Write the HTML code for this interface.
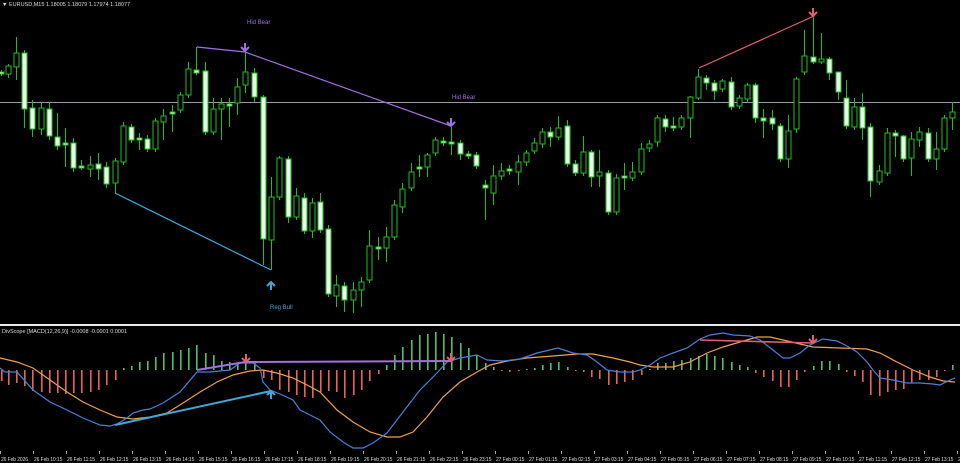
<!DOCTYPE html>
<html><head><meta charset="utf-8"><style>
html,body{margin:0;padding:0;background:#000;width:960px;height:463px;overflow:hidden}
svg{display:block}
text{font-family:"Liberation Sans",sans-serif}
</style></head><body>
<svg id="s" width="960" height="463" viewBox="0 0 960 463" xmlns="http://www.w3.org/2000/svg">
<rect width="960" height="463" fill="#000"/>
<line x1="0" y1="102.5" x2="960" y2="102.5" stroke="#9a9aaa" stroke-width="1"/>
<g id="candles"></g>
<polyline points="197,47 245,52 451,126" fill="none" stroke="#a070e0" stroke-width="1.2"/>
<line x1="115" y1="193" x2="271" y2="270" stroke="#40a8d8" stroke-width="1.2"/>
<line x1="699" y1="68" x2="814" y2="16" stroke="#e06070" stroke-width="1.2"/>
<text x="247" y="24" font-size="6" fill="#a070e0">Hid Bear</text>
<text x="452" y="99" font-size="6" fill="#a070e0">Hid Bear</text>
<text x="270" y="309" font-size="6" fill="#40a8d8">Reg Bull</text>
<g id="arrows"></g>
<text x="2" y="6" font-size="5.5" fill="#dddddd">▼ EURUSD,M15  1.18005 1.18079 1.17974 1.18077</text>
<rect x="0" y="324" width="960" height="2" fill="#e8e8e8"/>
<text x="2" y="333" font-size="5.5" fill="#dddddd">DivScope [MACD(12,26,9)] -0.0008 -0.0001 0.0001</text>
<g id="hist"></g>
<g id="lines"></g>
<g id="axis"></g>
</svg>
<script>
var NS="http://www.w3.org/2000/svg";
function el(p,t,a){var e=document.createElementNS(NS,t);for(var k in a)e.setAttribute(k,a[k]);p.appendChild(e);return e;}
var C=[[1,70,76,72,74,'w'],[8,64,78,66,74,'h'],[16,37,80,53,67,'h'],[24,50,128,53,109,'w'],[32,100,137,108,129,'w'],[41,102,135,108,129,'h'],[49,102,140,109,136,'w'],[57,113,150,137,146,'w'],[65,128,167,143,145,'w'],[73,138,172,143,168,'w'],[81,160,170,166,168,'w'],[90,156,177,165,169,'h'],[98,153,180,164,169,'w'],[106,162,188,167,184,'w'],[115,158,193,161,183,'h'],[123,122,165,126,162,'h'],[131,124,143,127,140,'w'],[139,133,150,138,140,'w'],[147,135,152,139,149,'w'],[155,118,152,121,149,'h'],[163,109,140,116,122,'h'],[172,105,132,112,114,'w'],[180,92,113,95,110,'h'],[188,62,98,69,95,'h'],[196,47,75,70,73,'w'],[205,62,135,71,132,'w'],[213,98,135,109,132,'h'],[221,98,140,104,109,'h'],[229,98,127,104,106,'w'],[237,78,115,87,103,'h'],[245,50,93,72,85,'h'],[254,68,102,73,97,'w'],[263,95,265,97,239,'w'],[271,177,270,197,240,'h'],[279,156,200,158,197,'h'],[288,156,223,159,217,'w'],[296,188,220,196,217,'h'],[304,193,234,198,231,'w'],[312,198,238,203,231,'h'],[320,193,233,202,230,'w'],[328,225,297,229,294,'w'],[336,275,307,285,296,'h'],[344,282,312,286,300,'w'],[353,282,313,290,300,'h'],[361,277,307,282,290,'h'],[369,230,283,246,280,'h'],[378,237,260,247,249,'w'],[386,227,262,237,248,'h'],[394,200,240,205,237,'h'],[402,183,213,189,207,'h'],[411,163,191,172,188,'h'],[419,155,177,167,169,'w'],[427,153,177,155,167,'h'],[435,137,156,140,153,'h'],[443,137,146,141,143,'w'],[451,127,155,142,144,'w'],[460,140,160,143,154,'w'],[468,151,159,154,156,'w'],[476,152,169,155,166,'w'],[485,180,220,185,188,'w'],[493,165,205,176,193,'h'],[501,163,180,171,176,'h'],[509,165,175,169,171,'w'],[518,155,185,162,172,'h'],[526,150,166,153,162,'h'],[534,138,154,143,151,'h'],[542,128,148,132,144,'h'],[550,127,147,132,137,'w'],[558,116,140,128,137,'h'],[567,120,167,126,164,'w'],[575,160,176,164,173,'w'],[583,136,176,152,173,'h'],[591,150,187,152,177,'w'],[599,150,187,172,176,'h'],[608,170,215,173,212,'w'],[616,174,215,178,212,'h'],[624,163,190,176,178,'w'],[632,162,181,172,178,'h'],[641,143,175,149,172,'h'],[649,140,152,144,148,'h'],[657,115,147,118,142,'h'],[665,115,132,119,127,'w'],[673,117,131,126,128,'w'],[681,115,130,118,127,'h'],[690,96,138,97,118,'h'],[698,69,100,77,98,'h'],[706,75,90,78,83,'w'],[714,80,100,83,91,'w'],[722,79,92,81,89,'h'],[731,77,110,82,107,'w'],[739,95,109,98,106,'h'],[747,83,103,85,99,'h'],[755,83,123,85,118,'w'],[763,109,138,118,121,'w'],[772,110,130,118,124,'w'],[780,123,162,126,159,'w'],[788,115,168,131,159,'h'],[796,77,133,79,129,'h'],[804,30,75,56,72,'h'],[813,15,64,57,62,'w'],[821,33,64,59,62,'h'],[829,57,80,59,73,'w'],[838,72,100,72,92,'w'],[846,80,129,98,126,'w'],[854,98,130,107,127,'h'],[862,93,140,107,128,'w'],[870,123,197,127,181,'w'],[879,165,185,171,182,'h'],[887,128,176,133,173,'h'],[895,130,157,133,136,'w'],[903,135,162,136,159,'w'],[911,132,176,139,158,'h'],[919,127,147,132,140,'h'],[928,128,162,133,159,'w'],[936,132,170,149,159,'h'],[944,115,152,118,149,'h'],[952,102,130,112,118,'h']];
var g=document.getElementById('candles');
C.forEach(function(c){var x=c[0];
el(g,'line',{x1:x+.5,y1:c[1],x2:x+.5,y2:c[2],stroke:'#1fbf1f','stroke-width':1});
var h=Math.max(c[4]-c[3],1.5);
el(g,'rect',{x:x-2,y:c[3],width:5,height:h,fill:c[5]=='w'?'#eaffea':'#000',stroke:'#1fbf1f','stroke-width':1});
});
var H=[-11,-15,-13,-16,-21,-22,-23,-23,-24,-23,-23,-22,-20,-15,-10,2,4,8,9,13,17,18,20,22,25,17,15,9,8,7,7,7,-8,-10,-20,-22,-25,-27,-28,-22,-21,-22,-28,-25,-20,-11,-4,5,15,23,30,35,36,38,36,33,27,22,15,7,3,-1,-2,-1,1,2,5,7,8,3,-1,-2,-7,-9,-15,-14,-12,-10,-5,1,7,7,9,10,12,14,16,14,12,8,5,3,-3,-7,-11,-17,-17,-10,-2,4,9,9,6,-2,-6,-12,-25,-26,-22,-20,-19,-13,-10,-10,-7,-1,5];
var hg=document.getElementById('hist');
H.forEach(function(v,i){var x=C[i]?C[i][0]:i*8.2;
if(v>0)el(hg,'rect',{x:x,y:370-v,width:1.6,height:v,fill:'#4fbf6f'});
else el(hg,'rect',{x:x,y:370,width:1.6,height:-v,fill:'#e8605f'});});
var lg=document.getElementById('lines');
var blue="0,368 5,372 17,372 33,390 50,402 67,410 83,418 100,425 110,426 117,424 127,418 133,413 143,410 150,409 163,403 180,392 197,372 210,372 230,370 240,363 253,363 260,368 263,382 270,390 280,394 293,400 300,410 310,415 320,420 330,432 343,442 353,448 363,448 373,443 387,433 403,412 420,390 437,373 447,362 460,358 477,355 487,360 503,361 520,359 537,353 558,348 573,353 587,355 597,362 607,370 620,372 633,372 640,370 650,365 660,358 673,353 687,348 700,339 710,335 723,333 733,335 750,336 760,340 773,350 783,358 790,358 800,353 810,345 823,339 837,341 847,346 857,352 867,362 873,370 880,378 893,380 907,383 920,383 933,384 940,385 950,380 955,378";
var orange="0,358 17,362 33,368 50,380 67,392 83,402 100,410 117,417 133,419 150,417 167,413 183,403 200,392 217,382 233,375 250,371 263,370 277,373 293,378 307,385 320,392 337,410 353,422 370,432 387,437 400,437 413,432 427,417 443,397 460,382 477,372 490,365 507,361 527,358 553,356 577,354 593,354 613,358 630,362 640,365 653,367 673,367 690,362 707,353 723,347 740,342 757,337 770,337 783,340 800,344 813,347 840,348 867,349 880,353 897,362 913,370 930,377 943,381 955,382";
el(lg,'polyline',{points:orange,fill:'none',stroke:'#f0a050','stroke-width':1.2});
el(lg,'polyline',{points:blue,fill:'none',stroke:'#4a80d8','stroke-width':1.2});
el(lg,'polyline',{points:'197,370 245,362 451,361',fill:'none',stroke:'#a070e0','stroke-width':2});
el(lg,'line',{x1:115,y1:425,x2:271,y2:391,stroke:'#40a8d8','stroke-width':2});
el(lg,'line',{x1:700,y1:340,x2:813,y2:343,stroke:'#e06070','stroke-width':1.6});
var ag=document.getElementById('arrows');
function arrow(x,y,dir,col,p){var d=dir=='d'?('M'+x+' '+(y-8)+' L'+x+' '+y+' M'+(x-4)+' '+(y-4)+' L'+x+' '+y+' L'+(x+4)+' '+(y-4)):('M'+x+' '+(y+8)+' L'+x+' '+y+' M'+(x-4)+' '+(y+4)+' L'+x+' '+y+' L'+(x+4)+' '+(y+4));
el(p,'path',{d:d,fill:'none',stroke:col,'stroke-width':2});}
arrow(245,51,'d','#a070e0',ag);arrow(451,126,'d','#a070e0',ag);arrow(271,282,'u','#40a8d8',ag);arrow(813,16,'d','#e06070',ag);
arrow(246,362,'d','#e06070',lg);arrow(451,361,'d','#e06070',lg);arrow(271,391,'u','#40a8d8',lg);arrow(813,343,'d','#e06070',lg);
var ax=document.getElementById('axis');
var L=['26 Feb 2026'];['10','11','12','13','14','15','16','17','18','19','20','21','22','23'].forEach(function(h){L.push('26 Feb '+h+':15')});
['00','01','02','03','04','05','06','07','08','09','10','11','12','13'].forEach(function(h){L.push('27 Feb '+h+':15')});L.push('27');
L.forEach(function(t,i){var x=i*33;el(ax,'line',{x1:x+.5,y1:451,x2:x+.5,y2:454,stroke:'#aaa'});var e=el(ax,'text',{x:x+1,y:461,'font-size':'5','letter-spacing':'-0.1',fill:'#dddddd'});e.textContent=t;});
</script>
</body></html>
